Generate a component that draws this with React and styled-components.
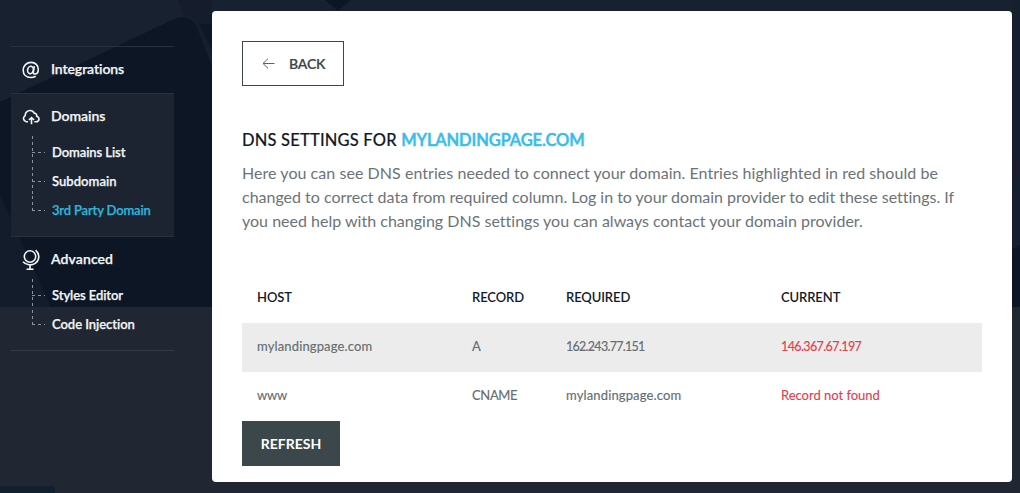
import React from 'react';
import styled, { createGlobalStyle } from 'styled-components';

const Global = createGlobalStyle`
  * { box-sizing: border-box; }
  body {
    margin: 0;
    font-family: Lato, "Liberation Sans", sans-serif;
    font-variant-ligatures: none;
  }
`;

const Page = styled.div`
  position: relative;
  isolation: isolate;
  display: flex;
  gap: 38px;
  width: 1020px;
  height: 493px;
  padding: 11px 8px 11px 11px;
  overflow: hidden;
  background: #202732;
`;

const Backdrop = styled.svg`
  position: absolute;
  inset: 0;
  z-index: -1;
`;

const Sidebar = styled.nav`
  flex: 0 0 163px;
  padding-top: 35px;
`;

const Section = styled.section`
  height: ${(p) => p.$height}px;
  padding-left: 11px;
  border-top: 1px solid #29313d;
  background: ${(p) => (p.$active ? '#1b2430' : 'transparent')};

  &:last-child {
    border-bottom: 1px solid #333a46;
  }
`;

const SectionTitle = styled.div`
  display: flex;
  align-items: center;
  gap: 11px;
  height: 45px;
  color: #f3f4f5;
  font-size: 14px;
  font-weight: 600;
  letter-spacing: ${(p) => p.$spacing || 0}px;
  -webkit-text-stroke: 0.25px currentColor;

  svg {
    flex: none;
  }
`;

const TitleText = styled.span`
  padding-bottom: 2px;
`;

const SubList = styled.ul`
  list-style: none;
  margin: -2px 0 0;
  padding: 0;
`;

const SubItem = styled.li`
  display: flex;
  align-items: center;
  gap: 6px;
  height: 29px;
  padding-left: 10px;
  color: ${(p) => (p.$current ? '#2fb4dc' : '#f3f4f5')};
  font-size: 13px;
  font-weight: 600;
  letter-spacing: ${(p) => p.$spacing || 0}px;
  -webkit-text-stroke: 0.25px currentColor;
  white-space: nowrap;
`;

const Branch = styled.svg`
  flex: none;
`;

const Panel = styled.main`
  flex: 1;
  height: 471px;
  padding: 30px;
  border-radius: 4px;
  background: #fff;
`;

const BackButton = styled.button`
  display: flex;
  align-items: center;
  gap: 14px;
  width: 102px;
  height: 45px;
  padding: 0 0 0 19px;
  border: 1px solid #3b474a;
  background: #fff;
  color: #3b474a;
  font: 600 14px Lato, sans-serif;
  letter-spacing: -0.2px;
  -webkit-text-stroke: 0.2px currentColor;
`;

const Heading = styled.h1`
  margin: 43px 0 0;
  color: #131a29;
  font-size: 16.5px;
  font-weight: 500;
  line-height: 22px;
  letter-spacing: 0.19px;
  -webkit-text-stroke: 0.15px currentColor;
  white-space: nowrap;
`;

const DomainName = styled.span`
  color: #38bdea;
  font-weight: 600;
  letter-spacing: -0.11px;
  -webkit-text-stroke: 0.5px currentColor;
`;

const Intro = styled.p`
  margin: 10px 0 0;
  color: #6c7377;
  font-size: 16px;
  line-height: 24px;
`;

const Line = styled.span`
  display: block;
  white-space: nowrap;
  letter-spacing: ${(p) => p.$spacing || 0}px;
`;

const Table = styled.div`
  margin-top: 41px;
`;

const Row = styled.div`
  display: grid;
  grid-template-columns: 215px 94px 215px 1fr;
  align-items: center;
  height: 49px;
  padding: 0 0 4px 15px;
  background: ${(p) => (p.$shaded ? '#ececec' : 'transparent')};
  color: #666d70;
  font-size: 13px;
`;

const HeaderRow = styled(Row)`
  color: #131a29;
  font-weight: 600;
`;

const Cell = styled.span`
  padding-top: ${(p) => (p.$address ? 2 : 0)}px;
  letter-spacing: ${(p) => p.$spacing || 0}px;
  font-size: ${(p) => (p.$address ? 12.5 : 13)}px;
  color: ${(p) => (p.$error ? '#d94452' : 'inherit')};
  -webkit-text-stroke: ${(p) => (p.$head ? 0 : '0.15px currentColor')};
`;

const RefreshButton = styled.button`
  display: block;
  width: 98px;
  height: 45px;
  padding: 0;
  border: 0;
  background: #3b474a;
  color: #fff;
  font: 700 14px Lato, sans-serif;
`;

const AtIcon = () => (
  <svg width="18" height="18" viewBox="0 0 18 18" fill="none" stroke="#f3f4f5" strokeWidth="1.6">
    <ellipse cx="8.500" cy="9" rx="2.900" ry="3.700" transform="rotate(12 8.5 9)" />
    <path d="M12.300 5.200l-1 6c-.2 1.400.6 1.900 1.500 1.800 2-.1 3.500-2 3.500-4.600 0-4.100-3-7-7.200-7C4.600 1.400 1.200 4.800 1.200 9.200s3.100 7.300 7.600 7.300c1.800 0 3.300-.4 4.900-1.300" />
  </svg>
);

const CloudIcon = () => (
  <svg width="18" height="18" viewBox="0 0 18 18" fill="none" stroke="#f3f4f5" strokeWidth="1.6">
    <path d="M6 13.700H4.200A3.300 3.300 0 0 1 3.200 7.600C3 4.500 5.600 2.500 8 2.500c2.100 0 3.500 1 4.200 2.600 2 .1 2.900 1.700 2.500 3.200 1.600.6 2.500 1.600 2.300 3-.2 1.500-1.400 2.400-3 2.400h-1.700" />
    <path d="M9.500 16.300v-6M6.900 12l2.600-2.400L12.100 12" />
  </svg>
);

const GlobeIcon = () => (
  <svg width="18" height="22" viewBox="0 0 18 22" fill="none" stroke="#f3f4f5" strokeWidth="1.6">
    <circle cx="8" cy="7.500" r="5.700" />
    <path d="M13.600 1.200C18.200 5.400 17.600 11.600 13.200 14.400C9.400 16.800 4 16.200 1 12.800M8 16v4.300M4.500 20.300h7" />
  </svg>
);

const ArrowIcon = () => (
  <svg width="13" height="12" viewBox="0 0 13 12" fill="none" stroke="#5a6467" strokeWidth="1">
    <path d="M12.500 5.500H1M6 .7L1 5.500l5 4.800" />
  </svg>
);

const Connector = ({ first, last }) => (
  <Branch width="14" height="29" viewBox="0 0 14 29" fill="none" stroke="#8d939b" overflow="visible" strokeDasharray="3 3">
    <path d={`M.5 ${first ? -1 : 1}V${last ? 15 : 29}M0 15.500H13`} />
  </Branch>
);

const sections = [
  { title: 'Integrations', Icon: AtIcon, height: 47, spacing: -0.08, items: [] },
  {
    title: 'Domains', Icon: CloudIcon, height: 143, spacing: -0.05, active: true,
    items: [['Domains List', -0.08], ['Subdomain', 0.05], ['3rd Party Domain', -0.17, true]],
  },
  {
    title: 'Advanced', Icon: GlobeIcon, height: 115, spacing: 0.1,
    items: [['Styles Editor', -0.08], ['Code Injection', -0.04]],
  },
];

const rows = [
  [['mylandingpage.com', 0.14], ['A'], ['162.243.77.151', -0.72, true], ['146.367.67.197', -0.6, true]],
  [['www', -0.2], ['CNAME', -0.35], ['mylandingpage.com', 0.14], ['Record not found', -0.02]],
];

export default function App() {
  return (
    <Page>
      <Global />
      <Backdrop width="1020" height="493" viewBox="0 0 1020 493">
        <path d="M0 0H1020V307H0Z" fill="#0d1624" />
        <path d="M0 0H1020V24H196Q187 13 174 19L0 102Z" fill="#182130" />
        <path d="M184 16Q193 18 197 27L212 66V50L199 24Q195 16 184 16Z" fill="#17212d" />
        <path d="M196 22L212 55V0H178L184 16Q193 16 196 22Z" fill="#111a27" opacity=".4" />
        <path d="M325 0h26l-13 11Z" fill="#0d1624" />
        <path d="M0 195L51 307H0Z" fill="#131c2a" />
        <path d="M1012 0h8v245l-8 4Z" fill="#161f2e" />
        <path d="M1012 158l5 6v12l-5 4Z" fill="#1d1a2c" />
        <path d="M0 486H55V493H0Z" fill="#10202f" />
      </Backdrop>
      <Sidebar>
        {sections.map(({ title, Icon, height, active, spacing, items }) => (
          <Section key={title} $height={height} $active={active}>
            <SectionTitle $spacing={spacing}><Icon /><TitleText>{title}</TitleText></SectionTitle>
            {items.length > 0 && (
              <SubList>
                {items.map(([label, gap, current], i) => (
                  <SubItem key={label} $spacing={gap} $current={current}>
                    <Connector first={i === 0} last={i === items.length - 1} />
                    {label}
                  </SubItem>
                ))}
              </SubList>
            )}
          </Section>
        ))}
      </Sidebar>
      <Panel>
        <BackButton><ArrowIcon />BACK</BackButton>
        <Heading>DNS SETTINGS FOR <DomainName>MYLANDINGPAGE.COM</DomainName></Heading>
        <Intro>
          <Line $spacing={0.05}>Here you can see DNS entries needed to connect your domain. Entries highlighted in red should be</Line>
          <Line $spacing={-0.01}>changed to correct data from required column. Log in to your domain provider to edit these settings. If</Line>
          <Line $spacing={0.01}>you need help with changing DNS settings you can always contact your domain provider.</Line>
        </Intro>
        <Table>
          <HeaderRow>
            {['HOST', 'RECORD', 'REQUIRED', 'CURRENT'].map((h) => <Cell key={h} $head $spacing={-0.1}>{h}</Cell>)}
          </HeaderRow>
          {rows.map((cells, r) => (
            <Row key={r} $shaded={r === 0}>
              {cells.map(([text, gap, address], c) => (
                <Cell key={c} $spacing={gap} $address={address} $error={c === 3}>{text}</Cell>
              ))}
            </Row>
          ))}
        </Table>
        <RefreshButton>REFRESH</RefreshButton>
      </Panel>
    </Page>
  );
}
